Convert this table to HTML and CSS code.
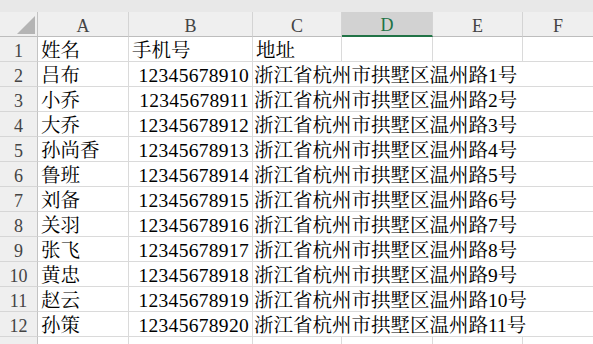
FILE: index.html
```html
<!DOCTYPE html>
<html lang="zh-CN">
<head>
<meta charset="utf-8">
<title>Sheet</title>
<link rel="stylesheet" href="styles.css">
</head>
<body>
<div class="strip"></div>
<div class="sheet">
  <div class="corner"><span class="tri"></span></div>
  <div class="ch">A</div>
  <div class="ch">B</div>
  <div class="ch">C</div>
  <div class="ch sel">D</div>
  <div class="ch">E</div>
  <div class="ch last">F</div>

  <div class="rh">1</div>
  <div class="c">姓名</div>
  <div class="c">手机号</div>
  <div class="c">地址</div>
  <div class="c"></div>
  <div class="c"></div>
  <div class="c last"></div>

  <div class="rh">2</div><div class="c">吕布</div><div class="c num">12345678910</div><div class="c addr">浙江省杭州市拱墅区温州路1号</div>
  <div class="rh">3</div><div class="c">小乔</div><div class="c num">12345678911</div><div class="c addr">浙江省杭州市拱墅区温州路2号</div>
  <div class="rh">4</div><div class="c">大乔</div><div class="c num">12345678912</div><div class="c addr">浙江省杭州市拱墅区温州路3号</div>
  <div class="rh">5</div><div class="c">孙尚香</div><div class="c num">12345678913</div><div class="c addr">浙江省杭州市拱墅区温州路4号</div>
  <div class="rh">6</div><div class="c">鲁班</div><div class="c num">12345678914</div><div class="c addr">浙江省杭州市拱墅区温州路5号</div>
  <div class="rh">7</div><div class="c">刘备</div><div class="c num">12345678915</div><div class="c addr">浙江省杭州市拱墅区温州路6号</div>
  <div class="rh">8</div><div class="c">关羽</div><div class="c num">12345678916</div><div class="c addr">浙江省杭州市拱墅区温州路7号</div>
  <div class="rh">9</div><div class="c">张飞</div><div class="c num">12345678917</div><div class="c addr">浙江省杭州市拱墅区温州路8号</div>
  <div class="rh">10</div><div class="c">黄忠</div><div class="c num">12345678918</div><div class="c addr">浙江省杭州市拱墅区温州路9号</div>
  <div class="rh">11</div><div class="c">赵云</div><div class="c num">12345678919</div><div class="c addr">浙江省杭州市拱墅区温州路10号</div>
  <div class="rh">12</div><div class="c">孙策</div><div class="c num">12345678920</div><div class="c addr">浙江省杭州市拱墅区温州路11号</div>

  <div class="rh"></div>
  <div class="c"></div>
  <div class="c"></div>
  <div class="c"></div>
  <div class="c"></div>
  <div class="c"></div>
  <div class="c last"></div>
</div>
</body>
</html>
```
FILE: styles.css
```css
html, body {
  margin: 0;
  padding: 0;
  background: #ffffff;
  overflow: hidden;
}

.strip {
  height: 12px;
  background: #e8e8e8;
}

.sheet {
  display: grid;
  grid-template-columns: 38px 91px 124px 89px 91px 90px 1fr;
  grid-auto-rows: 25px;
  font-family: "Liberation Serif", "Noto Serif CJK SC", "Noto Sans CJK SC", serif;
}

.corner {
  background: #efefef;
  border-right: 1px solid #c3c3c3;
  border-bottom: 1px solid #bdbdbd;
  box-sizing: border-box;
  display: flex;
  justify-content: flex-end;
  align-items: flex-end;
  padding: 0 2px 2px 0;
}

.tri {
  width: 18px;
  height: 18px;
  background: #b4b4b4;
  clip-path: polygon(100% 0, 100% 100%, 0 100%);
}

.ch {
  background: #efefef;
  border-right: 1px solid #d4d4d4;
  border-bottom: 1px solid #bdbdbd;
  box-sizing: border-box;
  display: flex;
  justify-content: center;
  align-items: flex-end;
  font-size: 18px;
  line-height: 20px;
  color: #444444;
}

.ch.sel {
  background: #d2d2d2;
  border-bottom: 2px solid #217346;
  color: #217346;
  line-height: 19px;
}

.ch.last {
  border-right: none;
}

.rh {
  background: #efefef;
  border-right: 1px solid #c3c3c3;
  border-bottom: 1px solid #d6d6d6;
  box-sizing: border-box;
  display: flex;
  justify-content: center;
  align-items: flex-end;
  font-size: 18px;
  line-height: 20px;
  color: #444444;
}

.c {
  border-right: 1px solid #dadada;
  border-bottom: 1px solid #dadada;
  box-sizing: border-box;
  display: flex;
  align-items: flex-end;
  padding: 0 3px;
  font-size: 19.5px;
  line-height: 20px;
  color: #000000;
  white-space: nowrap;
  overflow: hidden;
}

.c.num {
  justify-content: flex-end;
  letter-spacing: 0.3px;
}

.c.addr {
  grid-column: 4 / -1;
  border-right: none;
  padding-left: 1px;
}

.c.last {
  border-right: none;
}
```
